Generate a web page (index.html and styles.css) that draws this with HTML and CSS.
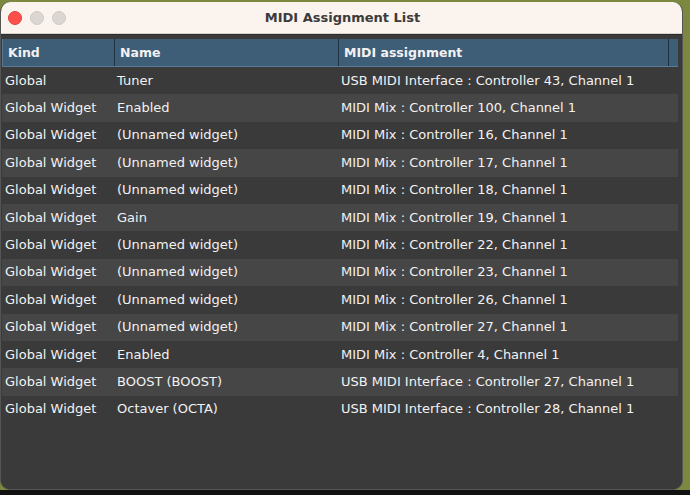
FILE: index.html
```
<!DOCTYPE html>
<html>
<head>
<meta charset="utf-8">
<link rel="stylesheet" href="styles.css">
</head>
<body>
<div class="desk">
  <div class="window">
    <div class="titlebar">
      <div class="lights">
        <span class="light red"></span>
        <span class="light grey"></span>
        <span class="light grey"></span>
      </div>
      <div class="title">MIDI Assignment List</div>
    </div>
    <div class="content">
      <div class="table">
        <div class="head">
          <div class="hc kind">Kind</div>
          <div class="hc name">Name</div>
          <div class="hc midi">MIDI assignment</div>
          <div class="hc pad"></div>
        </div>
        <div class="row"><div class="c kind">Global</div><div class="c name">Tuner</div><div class="c midi">USB MIDI Interface : Controller 43, Channel 1</div></div>
        <div class="row alt"><div class="c kind">Global Widget</div><div class="c name">Enabled</div><div class="c midi">MIDI Mix : Controller 100, Channel 1</div></div>
        <div class="row"><div class="c kind">Global Widget</div><div class="c name">(Unnamed widget)</div><div class="c midi">MIDI Mix : Controller 16, Channel 1</div></div>
        <div class="row alt"><div class="c kind">Global Widget</div><div class="c name">(Unnamed widget)</div><div class="c midi">MIDI Mix : Controller 17, Channel 1</div></div>
        <div class="row"><div class="c kind">Global Widget</div><div class="c name">(Unnamed widget)</div><div class="c midi">MIDI Mix : Controller 18, Channel 1</div></div>
        <div class="row alt"><div class="c kind">Global Widget</div><div class="c name">Gain</div><div class="c midi">MIDI Mix : Controller 19, Channel 1</div></div>
        <div class="row"><div class="c kind">Global Widget</div><div class="c name">(Unnamed widget)</div><div class="c midi">MIDI Mix : Controller 22, Channel 1</div></div>
        <div class="row alt"><div class="c kind">Global Widget</div><div class="c name">(Unnamed widget)</div><div class="c midi">MIDI Mix : Controller 23, Channel 1</div></div>
        <div class="row"><div class="c kind">Global Widget</div><div class="c name">(Unnamed widget)</div><div class="c midi">MIDI Mix : Controller 26, Channel 1</div></div>
        <div class="row alt"><div class="c kind">Global Widget</div><div class="c name">(Unnamed widget)</div><div class="c midi">MIDI Mix : Controller 27, Channel 1</div></div>
        <div class="row"><div class="c kind">Global Widget</div><div class="c name">Enabled</div><div class="c midi">MIDI Mix : Controller 4, Channel 1</div></div>
        <div class="row alt"><div class="c kind">Global Widget</div><div class="c name">BOOST (BOOST)</div><div class="c midi">USB MIDI Interface : Controller 27, Channel 1</div></div>
        <div class="row"><div class="c kind">Global Widget</div><div class="c name">Octaver (OCTA)</div><div class="c midi">USB MIDI Interface : Controller 28, Channel 1</div></div>
      </div>
    </div>
  </div>
  <div class="floor"></div>
</div>
</body>
</html>
```
FILE: styles.css
```
* { box-sizing: border-box; }
html, body {
  margin: 0;
  padding: 0;
  width: 690px;
  height: 495px;
  overflow: hidden;
  background: #7c883f;
}
.desk {
  display: flex;
  flex-direction: column;
  padding-top: 2px;
  height: 495px;
}
.window {
  width: 683px;
  height: 488px;
  border-radius: 10px;
  overflow: hidden;
  background: #3a3a3a;
  display: flex;
  flex-direction: column;
  border: 1px solid #555;
  border-top: none;
}
.floor {
  flex: 1;
  background: #111;
}
.titlebar {
  height: 32px;
  background: #faf3ee;
  position: relative;
  display: flex;
  align-items: center;
  justify-content: center;
  border-bottom: 1px solid #d8d2cd;
}
.lights {
  position: absolute;
  left: 7px;
  top: 9px;
  display: flex;
  gap: 8px;
}
.light {
  width: 14px;
  height: 14px;
  border-radius: 50%;
  display: block;
}
.light.red { background: #fe4f4a; border: 1px solid #e2403b; }
.light.grey { background: #dcd6d2; border: 1px solid #cfc9c5; }
.title {
  font-family: "DejaVu Sans", "Liberation Sans", sans-serif;
  font-weight: bold;
  font-size: 13px;
  color: #3b3b3b;
  padding-left: 2px;
  padding-bottom: 1px;
}
.content {
  flex: 1;
  background: #3a3a3a;
  padding: 4px 4px 0 1px;
  border-top: 1px solid #2c2c2c;
}
.table {
  font-family: "DejaVu Sans", "Liberation Sans", sans-serif;
  font-size: 13px;
  color: #f2f2f2;
}
.head {
  display: flex;
  height: 28px;
  background: #3e5d77;
  border-bottom: 1px solid #5a7c98;
  border-left: 1px solid #5a7590;
}
.hc {
  font-weight: bold;
  display: flex;
  align-items: center;
  padding-left: 5px;
  border-right: 1px solid #1f3142;
  font-size: 12.5px;
}
.hc.pad { flex: 1; border-right: none; }
.kind { width: 112px; }
.name { width: 224px; }
.midi { width: 330px; }
.row {
  display: flex;
  height: 27.4px;
  align-items: center;
  padding-bottom: 1px;
}
.row.alt { background: #464646; }
.c { padding-left: 3px; white-space: nowrap; }
```
